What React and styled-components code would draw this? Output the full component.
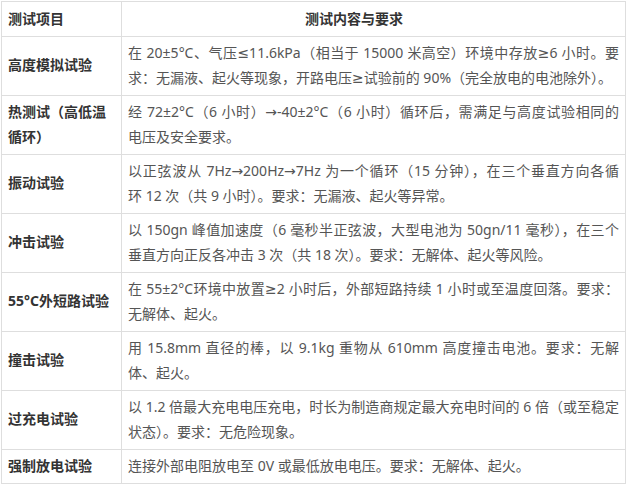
import styled, { createGlobalStyle } from 'styled-components';

const GlobalStyle = createGlobalStyle`
    body {
        margin: 0;
        background: #fff;
        font-family: "Noto Sans", "DejaVu Sans", "Noto Sans CJK SC", sans-serif;
    }
`

const rows = [
    {
        item: '高度模拟试验',
        lines: [
            '在 20±5°C、气压≤11.6kPa（相当于 15000 米高空）环境中存放≥6 小时。要',
            '求：无漏液、起火等现象，开路电压≥试验前的 90%（完全放电的电池除外）。',
        ],
    },
    {
        item: '热测试（高低温循环）',
        lines: [
            '经 72±2°C（6 小时）→-40±2°C（6 小时）循环后，需满足与高度试验相同的',
            '电压及安全要求。',
        ],
    },
    {
        item: '振动试验',
        lines: [
            '以正弦波从 7Hz→200Hz→7Hz 为一个循环（15 分钟），在三个垂直方向各循',
            '环 12 次（共 9 小时）。要求：无漏液、起火等异常。',
        ],
    },
    {
        item: '冲击试验',
        lines: [
            '以 150gn 峰值加速度（6 毫秒半正弦波，大型电池为 50gn/11 毫秒），在三个',
            '垂直方向正反各冲击 3 次（共 18 次）。要求：无解体、起火等风险。',
        ],
    },
    {
        item: '55°C外短路试验',
        lines: [
            '在 55±2°C环境中放置≥2 小时后，外部短路持续 1 小时或至温度回落。要求：',
            '无解体、起火。',
        ],
    },
    {
        item: '撞击试验',
        lines: [
            '用 15.8mm 直径的棒，以 9.1kg 重物从 610mm 高度撞击电池。要求：无解',
            '体、起火。',
        ],
    },
    {
        item: '过充电试验',
        lines: [
            '以 1.2 倍最大充电电压充电，时长为制造商规定最大充电时间的 6 倍（或至稳定',
            '状态）。要求：无危险现象。',
        ],
    },
    {
        item: '强制放电试验',
        lines: ['连接外部电阻放电至 0V 或最低放电电压。要求：无解体、起火。'],
    },
]

const App = () => {
    return (
        <>
            <GlobalStyle />
            <Table>
                <colgroup>
                    <col style={{ width: 120 }} />
                    <col />
                </colgroup>
                <thead>
                    <tr>
                        <HeadCell>测试项目</HeadCell>
                        <HeadCell $indent={183}>测试内容与要求</HeadCell>
                    </tr>
                </thead>
                <tbody>
                    {rows.map((r, index) => (
                        <tr key={index}>
                            <ItemCell>{r.item}</ItemCell>
                            <DescCell>
                                {r.lines.map((l, i) => (
                                    <Line key={i} $fill={i < r.lines.length - 1}>{l}</Line>
                                ))}
                            </DescCell>
                        </tr>
                    ))}
                </tbody>
            </Table>
        </>
    )
}
export default App

const Table = styled.table`
    margin: 1px 0 0 1px;
    width: 625px;
    border-collapse: collapse;
    table-layout: fixed;
    font-size: 14px;
    line-height: 24.5px;

    td, th {
        border: 1px solid #dedede;
        padding: 4.5px 6px;
        vertical-align: middle;
    }
`

const HeadCell = styled.th`
    text-align: left;
    font-weight: 700;
    color: #333;
    padding-left: ${(p) => (p.$indent || 6)}px !important;
`

const ItemCell = styled.td`
    font-weight: 700;
    color: #333;
`

const DescCell = styled.td`
    color: #555;
`

const Line = styled.span`
    display: block;
    white-space: nowrap;
    text-align: ${(p) => (p.$fill ? 'justify' : 'left')};
    text-align-last: ${(p) => (p.$fill ? 'justify' : 'left')};
`
